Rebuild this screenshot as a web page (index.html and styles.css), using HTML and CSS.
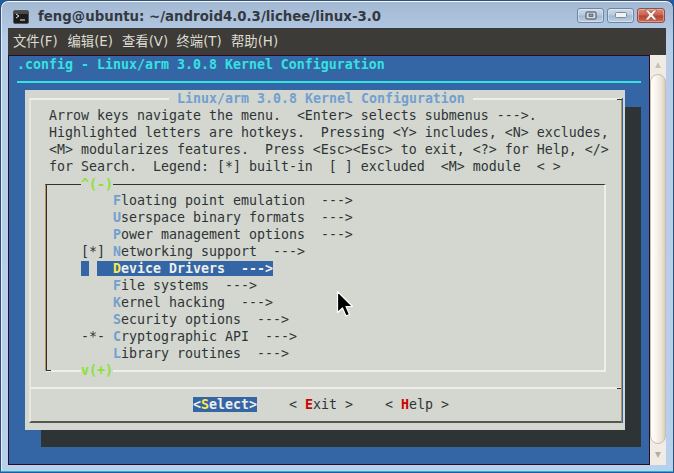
FILE: index.html
```html
<!DOCTYPE html>
<html lang="zh">
<head>
<meta charset="utf-8">
<title>feng@ubuntu: ~/android4.0.3/lichee/linux-3.0</title>
<link rel="stylesheet" href="styles.css">
</head>
<body>
<div class="window">
  <header class="titlebar">
    <svg class="app-icon" width="16" height="14" viewBox="0 0 16 14">
      <rect x="0.5" y="0.5" width="15" height="13" rx="1.5" fill="#1c1c1c" stroke="#555"/>
      <rect x="1" y="1" width="14" height="3" fill="#4a4a4a"/>
      <path d="M3 4l3 2-3 2" fill="none" stroke="#eee" stroke-width="1"/>
      <path d="M7 10h5" stroke="#eee" stroke-width="1"/>
    </svg>
    <h1 class="title">feng@ubuntu: ~/android4.0.3/lichee/linux-3.0</h1>
    <div class="controls">
      <div class="ctl">
        <svg width="12" height="9" viewBox="0 0 12 9"><rect x="1" y="1" width="10" height="7" rx="1" fill="#d7dde4" stroke="#3c4650"/><rect x="4" y="3" width="4" height="2.5" fill="#8a97a6" stroke="#3c4650" stroke-width="0.6"/></svg>
      </div>
      <div class="ctl">
        <svg width="12" height="6" viewBox="0 0 12 6"><rect x="0.5" y="0.5" width="11" height="5" rx="1" fill="#f2f2ee" stroke="#7c8a99"/></svg>
      </div>
      <div class="ctl close">
        <svg width="16" height="12" viewBox="0 0 16 12"><path d="M2 1h3.4L8 4l2.6-3H14l-4 5 4 5h-3.4L8 8l-2.6 3H2l4-5z" fill="#f4efe9" stroke="#7d4a40" stroke-width="0.6"/></svg>
      </div>
    </div>
  </header>
  <nav class="menubar">
    <span class="menu-item">文件(F)</span>
    <span class="menu-item">编辑(E)</span>
    <span class="menu-item">查看(V)</span>
    <span class="menu-item">终端(T)</span>
    <span class="menu-item">帮助(H)</span>
  </nav>
  <div class="content">
    <main class="terminal">
      <div class="row header">.config - Linux/arm 3.0.8 Kernel Configuration</div>
      <div class="row rule-row"><div class="rule"></div></div>
      <section class="dialog">
        <div class="frame">
          <div class="dialog-title">Linux/arm 3.0.8 Kernel Configuration</div>
          <div class="help">
            <div class="row">Arrow keys navigate the menu.  &lt;Enter&gt; selects submenus ---&gt;.</div>
            <div class="row">Highlighted letters are hotkeys.  Pressing &lt;Y&gt; includes, &lt;N&gt; excludes,</div>
            <div class="row">&lt;M&gt; modularizes features.  Press &lt;Esc&gt;&lt;Esc&gt; to exit, &lt;?&gt; for Help, &lt;/&gt;</div>
            <div class="row">for Search.  Legend: [*] built-in  [ ] excluded  &lt;M&gt; module  &lt; &gt;</div>
          </div>
          <div class="menu-box">
            <div class="more more-top">^(-)</div>
            <div class="row">    <b class="hot">F</b>loating point emulation  ---&gt;</div>
            <div class="row">    <b class="hot">U</b>serspace binary formats  ---&gt;</div>
            <div class="row">    <b class="hot">P</b>ower management options  ---&gt;</div>
            <div class="row">[*] <b class="hot">N</b>etworking support  ---&gt;</div>
            <div class="row"><span class="sel"> </span> <span class="sel">  <b class="hot-sel">D</b>evice Drivers  ---&gt;</span></div>
            <div class="row">    <b class="hot">F</b>ile systems  ---&gt;</div>
            <div class="row">    <b class="hot">K</b>ernel hacking  ---&gt;</div>
            <div class="row">    <b class="hot">S</b>ecurity options  ---&gt;</div>
            <div class="row">-*- <b class="hot">C</b>ryptographic API  ---&gt;</div>
            <div class="row">    <b class="hot">L</b>ibrary routines  ---&gt;</div>
            <div class="more more-bottom">v(+)</div>
          </div>
          <div class="buttons">
            <div class="row"><span class="sel">&lt;<b class="hot-sel">S</b>elect&gt;</span>    &lt; <b class="hot-red">E</b>xit &gt;    &lt; <b class="hot-red">H</b>elp &gt;</div>
          </div>
        </div>
      </section>
      <svg class="cursor" width="18" height="28" viewBox="0 0 18 28">
        <path d="M1.5 1.5v21l5-4.5 3.5 8 3.5-1.5-3.5-8h6.5z" fill="#000" stroke="#fff" stroke-width="1.2" stroke-linejoin="round"/>
      </svg>
    </main>
    <aside class="scrollbar">
      <div class="arrow-zone"><span class="arrow up"></span></div>
      <div class="thumb"></div>
      <div class="arrow-zone bottom"><span class="arrow down"></span></div>
    </aside>
  </div>
</div>
</body>
</html>
```
FILE: styles.css
```css
* { box-sizing: border-box; }
html, body { margin: 0; padding: 0; }
body {
  width: 674px;
  height: 473px;
  overflow: hidden;
  background: #1b5cab;
}
.window {
  width: 674px;
  height: 472px;
  display: flex;
  flex-direction: column;
  padding: 0 7px;
  border: 1px solid #2f4f74;
  border-bottom-color: #27b3c0;
  border-radius: 8px 8px 0 0;
  background: linear-gradient(#a3b9d2 0, #b7cde8 40px, #b7d0ec 100%);
  box-shadow: inset 0 1px 0 #f4f7fb, inset 1px 0 0 #e4edf6;
}
.titlebar {
  flex: none;
  height: 27px;
  display: flex;
  align-items: center;
  padding: 8px 0 0 5px;
}
.app-icon { flex: none; margin-top: -3px; }
.title {
  flex: 1;
  margin: -3px 0 0 9px;
  font: bold 13.33px/16px "DejaVu Sans", sans-serif;
  color: #35393f;
  white-space: pre;
}
.controls { display: flex; gap: 3px; margin-top: -7px; margin-right: 1px; }
.ctl {
  width: 27px;
  height: 15px;
  display: flex;
  align-items: center;
  justify-content: center;
  border: 1px solid #71859c;
  border-radius: 3px;
  background: linear-gradient(#cddbeb 0, #b4c8de 48%, #9fb7d1 52%, #bdd2e8 100%);
  box-shadow: inset 0 0 0 1px rgba(255,255,255,.35);
}
.ctl.close {
  width: 28px;
  border-color: #8c5148;
  background: linear-gradient(#d98a77 0, #c9604d 48%, #b5432f 52%, #cb6a55 100%);
}
.menubar {
  flex: none;
  height: 27px;
  display: flex;
  align-items: center;
  gap: 10px;
  padding-left: 5px;
  background: #3c3b37;
  font: 13.33px/17px "DejaVu Sans", "Noto Sans CJK SC", sans-serif;
  color: #dfdbd2;
}
.menu-item { width: 44.5px; white-space: nowrap; }
.content { flex: none; display: flex; height: 410px; }
.terminal {
  position: relative;
  width: 642px;
  height: 410px;
  border: 1px solid #300a24;
  background: #3465a4;
  font: 13.29px/17px "DejaVu Sans Mono", monospace;
  color: #2e3436;
}
.row { height: 17px; line-height: 17px; white-space: pre; }
.header { padding-left: 8px; color: #34e2e2; font-weight: bold; }
.rule-row { padding: 8px 8px 0; }
.rule { height: 2px; width: 624px; background: #34e2e2; }
.dialog {
  width: 600px;
  height: 340px;
  margin-left: 16px;
  padding-top: 8px;
  background: #d3d7cf;
  box-shadow: 16px 17px 0 #2e3436;
}
.frame {
  position: relative;
  width: 593px;
  height: 325px;
  margin-left: 4px;
  border-top: 2px solid #eeeeec;
  border-left: 2px solid #e9e6de;
  border-right: 1px solid #b0925f;
  border-bottom: 2px solid #555753;
  box-shadow: 1px 0 0 #3465a4;
}
.frame::after {
  content: "";
  position: absolute;
  top: -1px;
  right: -1px;
  width: 5px;
  height: 1px;
  background: #2e3436;
}
.dialog-title {
  position: absolute;
  top: -10px;
  left: 138px;
  padding: 0 8px;
  height: 17px;
  background: #d3d7cf;
  color: #729fcf;
  font-weight: bold;
}
.help { padding: 7px 0 0 18px; }
.menu-box {
  position: relative;
  width: 561px;
  height: 188px;
  margin: 9px 0 0 14px;
  padding: 7px 0 0 35px;
  border-top: 1px solid #2e3436;
  border-left: 1px solid #b98f4e;
  border-right: 2px solid #eeeeec;
  border-bottom: 2px solid #eeeeec;
  box-shadow: inset 1px 0 0 #2e3436;
}
.menu-box::after {
  content: "";
  position: absolute;
  left: 0;
  bottom: -1px;
  width: 5px;
  height: 1px;
  background: #2e3436;
}
.more {
  position: absolute;
  left: 35px;
  height: 17px;
  background: #d3d7cf;
  color: #8ae234;
  font-weight: bold;
}
.more-top { top: -9px; }
.more-bottom { bottom: -9px; }
.buttons {
  position: relative;
  margin-top: 15px;
  padding: 7px 0 0 162px;
  border-top: 2px solid #eeeeec;
}
.buttons::after {
  content: "";
  position: absolute;
  top: -1px;
  right: 0;
  width: 4px;
  height: 1px;
  background: #2e3436;
}
.hot { color: #729fcf; }
.hot-red { color: #cc0000; }
.hot-sel { color: #fce94f; }
.sel { background: #3465a4; color: #eeeeec; font-weight: bold; }
.cursor {
  position: absolute;
  left: 327px;
  top: 234px;
}
.scrollbar {
  flex: none;
  width: 16px;
  display: flex;
  flex-direction: column;
  background: #f0ebe4;
}
.arrow-zone {
  flex: none;
  height: 19px;
  display: flex;
  align-items: center;
  justify-content: center;
}
.arrow-zone.bottom { height: 21px; }
.arrow { width: 0; height: 0; border-left: 3.5px solid transparent; border-right: 3.5px solid transparent; }
.arrow.up { border-bottom: 6px solid #c9c2b2; }
.arrow.down { border-top: 6px solid #b5ad9c; }
.thumb {
  flex: 1;
  border: 1px solid #c9bfa9;
  border-radius: 8px;
  background: linear-gradient(90deg, #fff 0, #fbf7f1 30%, #e9e1d4 80%, #d6cdbd 100%);
}
```
